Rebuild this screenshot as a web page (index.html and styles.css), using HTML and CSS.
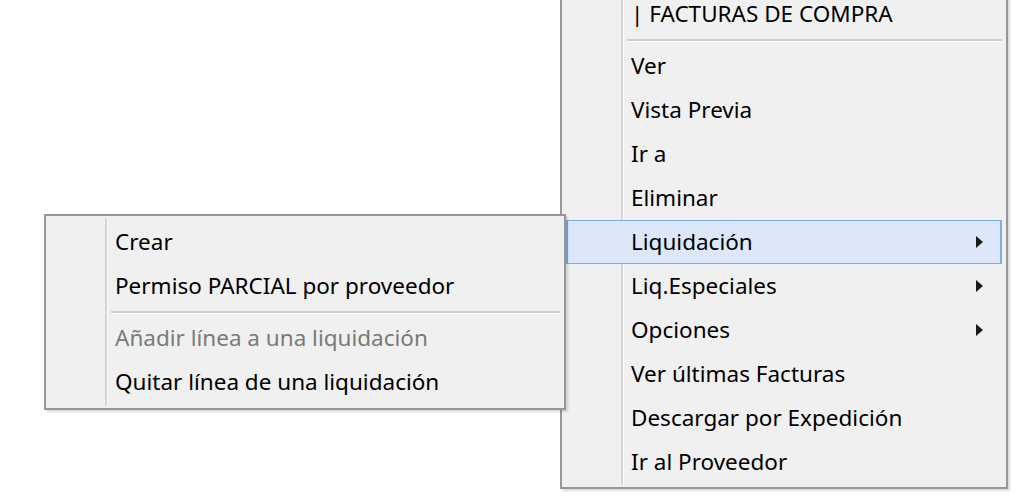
FILE: index.html
```html
<!DOCTYPE html>
<html lang="es">
<head>
<meta charset="utf-8">
<title>Menú contextual</title>
<link rel="stylesheet" href="styles.css">
</head>
<body>
<div class="desk">
  <ul class="menu menu-main">
    <li class="item">| FACTURAS DE COMPRA</li>
    <li class="sep"></li>
    <li class="item">Ver</li>
    <li class="item">Vista Previa</li>
    <li class="item">Ir a</li>
    <li class="item">Eliminar</li>
    <li class="item active has-sub">Liquidación</li>
    <li class="item has-sub">Liq.Especiales</li>
    <li class="item has-sub">Opciones</li>
    <li class="item">Ver últimas Facturas</li>
    <li class="item">Descargar por Expedición</li>
    <li class="item">Ir al Proveedor</li>
  </ul>
  <ul class="menu menu-sub">
    <li class="item">Crear</li>
    <li class="item">Permiso PARCIAL por proveedor</li>
    <li class="sep"></li>
    <li class="item disabled">Añadir línea a una liquidación</li>
    <li class="item">Quitar línea de una liquidación</li>
  </ul>
</div>
</body>
</html>
```

FILE: styles.css
```css
html, body {
  margin: 0;
  padding: 0;
  background: #ffffff;
}

.desk {
  position: relative;
  width: 1018px;
  height: 502px;
  overflow: hidden;
  font-family: "Noto Sans", "Open Sans", sans-serif;
  font-size: 22.5px;
  color: #000;
}

.menu {
  position: absolute;
  margin: 0;
  list-style: none;
  box-sizing: border-box;
  border: 2px solid #979797;
  padding: 4px 4px 4px 4px;
  background-color: #f0f0f0;
  background-image: linear-gradient(to right,
    transparent 0, transparent 59px,
    #d5d5d5 59px, #d5d5d5 61px,
    #fbfbfb 61px, #fbfbfb 62px,
    transparent 62px);
  background-repeat: no-repeat;
  background-position: 0 2px;
  background-size: 100% calc(100% - 4px);
  box-shadow: 2px 2px 2px rgba(0, 0, 0, 0.14);
}

.menu-main {
  left: 560px;
  top: -13px;
  width: 448px;
  height: 502px;
  padding-top: 3px;
}

.menu-sub {
  left: 44px;
  top: 214px;
  width: 522px;
  height: 196px;
  padding-top: 4px;
}

.item {
  position: relative;
  box-sizing: border-box;
  height: 44px;
  line-height: 40px;
  padding: 0 40px 0 63px;
  border: 2px solid transparent;
  white-space: nowrap;
}

.item.active {
  background: #dce8f9;
  border-color: #7aaee4;
  border-top-width: 1px;
  border-bottom-width: 1px;
  line-height: 42px;
}

.item.disabled {
  color: #7a7a7a;
}

.has-sub::after {
  content: "";
  position: absolute;
  right: 17px;
  top: 50%;
  margin-top: -6px;
  width: 0;
  height: 0;
  border-top: 6px solid transparent;
  border-bottom: 6px solid transparent;
  border-left: 7px solid #1a1a1a;
}

.sep {
  height: 8px;
  margin-left: 61px;
  background: linear-gradient(to bottom,
    transparent 0, transparent 3px,
    #cdcdcd 3px, #cdcdcd 5px,
    #fbfbfb 5px, #fbfbfb 6px,
    transparent 6px);
}
```
